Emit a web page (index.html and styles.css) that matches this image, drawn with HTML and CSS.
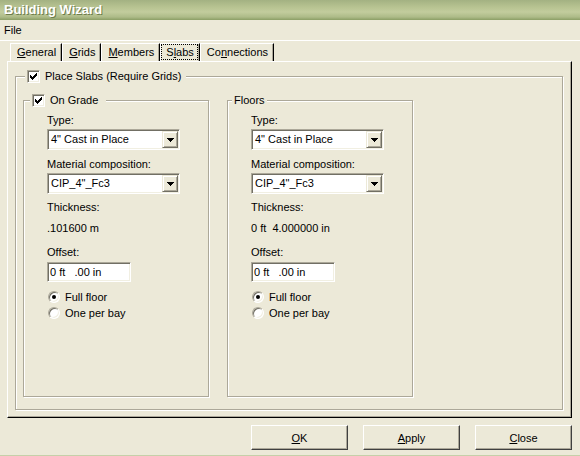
FILE: index.html
```html
<!DOCTYPE html>
<html>
<head>
<meta charset="utf-8">
<title>Building Wizard</title>
<link rel="stylesheet" href="styles.css">
</head>
<body>
<div class="window">
  <div class="titlebar">Building Wizard</div>
  <div class="menubar"><span class="menu-item">File</span></div>
  <div class="main">
    <div class="tabs">
      <div class="tab"><span class="tab-label"><u>G</u>eneral</span></div>
      <div class="tab"><span class="tab-label"><u>G</u>rids</span></div>
      <div class="tab"><span class="tab-label"><u>M</u>embers</span></div>
      <div class="tab tab-active"><span class="tab-label">S<u>l</u>abs</span></div>
      <div class="tab"><span class="tab-label">Co<u>n</u>nections</span></div>
    </div>
    <div class="panel">
      <fieldset class="group group-outer">
        <legend class="legend legend-outer">
          <span class="checkbox"><svg width="9" height="9" viewBox="0 0 9 9" shape-rendering="crispEdges"><path d="M1 3h1v3H1z M2 4h1v3H2z M3 5h1v3H3z M4 4h1v3H4z M5 3h1v3H5z M6 2h1v3H6z M7 1h1v3H7z" fill="#000"/></svg></span>
          <span>Place Slabs (Require Grids)</span>
        </legend>
        <div class="group-row">
          <fieldset class="group group-inner">
            <legend class="legend legend-grade">
              <span class="checkbox"><svg width="9" height="9" viewBox="0 0 9 9" shape-rendering="crispEdges"><path d="M1 3h1v3H1z M2 4h1v3H2z M3 5h1v3H3z M4 4h1v3H4z M5 3h1v3H5z M6 2h1v3H6z M7 1h1v3H7z" fill="#000"/></svg></span>
              <span>On Grade</span>
            </legend>
            <div class="group-body">
              <div class="label">Type:</div>
              <div class="combo">
                <span class="combo-text">4" Cast in Place</span>
                <span class="combo-btn"><svg width="7" height="4" viewBox="0 0 7 4" shape-rendering="crispEdges"><path d="M0 0h7v1H0z M1 1h5v1H1z M2 2h3v1H2z M3 3h1v1H3z" fill="#000"/></svg></span>
              </div>
              <div class="label label-after-combo">Material composition:</div>
              <div class="combo">
                <span class="combo-text">CIP_4"_Fc3</span>
                <span class="combo-btn"><svg width="7" height="4" viewBox="0 0 7 4" shape-rendering="crispEdges"><path d="M0 0h7v1H0z M1 1h5v1H1z M2 2h3v1H2z M3 3h1v1H3z" fill="#000"/></svg></span>
              </div>
              <div class="label label-thickness">Thickness:</div>
              <div class="label label-value">.101600 m</div>
              <div class="label label-offset">Offset:</div>
              <div class="textbox">0 ft   .00 in</div>
              <div class="radio-list">
                <div class="radio"><span class="radio-dot radio-checked"></span><span>Full floor</span></div>
                <div class="radio"><span class="radio-dot"></span><span>One per bay</span></div>
              </div>
            </div>
          </fieldset>
          <fieldset class="group group-inner">
            <legend class="legend legend-floors"><span>Floors</span></legend>
            <div class="group-body">
              <div class="label">Type:</div>
              <div class="combo">
                <span class="combo-text">4" Cast in Place</span>
                <span class="combo-btn"><svg width="7" height="4" viewBox="0 0 7 4" shape-rendering="crispEdges"><path d="M0 0h7v1H0z M1 1h5v1H1z M2 2h3v1H2z M3 3h1v1H3z" fill="#000"/></svg></span>
              </div>
              <div class="label label-after-combo">Material composition:</div>
              <div class="combo">
                <span class="combo-text">CIP_4"_Fc3</span>
                <span class="combo-btn"><svg width="7" height="4" viewBox="0 0 7 4" shape-rendering="crispEdges"><path d="M0 0h7v1H0z M1 1h5v1H1z M2 2h3v1H2z M3 3h1v1H3z" fill="#000"/></svg></span>
              </div>
              <div class="label label-thickness">Thickness:</div>
              <div class="label label-value">0 ft  4.000000 in</div>
              <div class="label label-offset">Offset:</div>
              <div class="textbox">0 ft   .00 in</div>
              <div class="radio-list">
                <div class="radio"><span class="radio-dot radio-checked"></span><span>Full floor</span></div>
                <div class="radio"><span class="radio-dot"></span><span>One per bay</span></div>
              </div>
            </div>
          </fieldset>
        </div>
      </fieldset>
    </div>
    <div class="buttons">
      <button class="btn"><u>O</u>K</button>
      <button class="btn"><u>A</u>pply</button>
      <button class="btn"><u>C</u>lose</button>
    </div>
  </div>
</div>
</body>
</html>
```

FILE: styles.css
```css
* { box-sizing: border-box; }
html, body { margin: 0; padding: 0; }
body {
  width: 580px;
  height: 456px;
  overflow: hidden;
  background: #ece9d8;
  color: #000;
  font: 11px "Liberation Sans", Arial, sans-serif;
}
u { text-underline-offset: 1px; }

.window {
  height: 456px;
  display: flex;
  flex-direction: column;
  border-bottom: 1px solid #c5d0a9;
}
.titlebar {
  flex: none;
  height: 20px;
  padding-left: 4px;
  font: bold 13px/19px "Liberation Sans", Arial, sans-serif;
  color: #fff;
  text-shadow: 1px 1px 0 #6e7d4c;
  background: linear-gradient(#a3b182 0, #b7c391 35%, #c2cc9d 60%, #adbb88 85%, #8b9e65 100%);
}
.menubar {
  flex: none;
  height: 21px;
  padding-left: 4px;
  line-height: 20px;
  border-bottom: 1px solid #fff;
}
.main {
  flex: 1;
  display: flex;
  flex-direction: column;
  padding: 2px 8px 0 7px;
}

/* tabs */
.tabs {
  display: flex;
  height: 18px;
  margin-left: 3px;
}
.tab {
  border-top: 1px solid #fff;
  border-left: 1px solid #fff;
  border-right: 1px solid #000;
  box-shadow: inset -1px 0 0 #aca899;
  padding: 0 5px 0 6px;
  line-height: 17px;
}
.tab-active {
  padding: 0 1px 0 0;
}
.tab-active .tab-label {
  display: block;
  height: 16px;
  line-height: 15px;
  padding: 0 3px 0 4px;
  border: 1px dotted #000;
}

/* panel */
.panel {
  height: 357px;
  display: flex;
  flex-direction: column;
  border-top: 1px solid #fff;
  border-left: 1px solid #fff;
  border-right: 1px solid #000;
  border-bottom: 1px solid #000;
  box-shadow: inset -1px -1px 0 #aca899;
  padding: 8px 8px 7px 7px;
}

.group {
  margin: 0;
  padding: 0;
  min-width: 0;
  border: 1px solid #aca899;
  box-shadow: inset 1px 1px 0 #fff, 1px 1px 0 #fff;
}
.group-outer {
  flex: 1;
}
.legend {
  height: 13px;
  line-height: 13px;
  display: flex;
  align-items: center;
  gap: 5px;
  background: #ece9d8;
}
.legend-outer { margin-left: 9px; padding: 0 5px 0 2px; }
.legend-grade { margin-left: 6px; padding: 0 8px 0 2px; }
.legend-floors { margin-left: 4px; padding: 0 2px; }

.checkbox {
  width: 13px;
  height: 13px;
  flex: none;
  background: #fff;
  border: 1px solid;
  border-color: #aca899 #fff #fff #aca899;
  box-shadow: inset 1px 1px 0 #716f64, inset -1px -1px 0 #f1efe2;
  padding: 1px;
  display: flex;
}

.group-row {
  display: flex;
  gap: 18px;
  padding: 11px 0 0 7px;
}
.group-inner {
  width: 186px;
  height: 303px;
}
.group-body {
  padding: 7px 0 0 23px;
}

.label {
  height: 13px;
  line-height: 13px;
  white-space: pre;
}
.label-after-combo { margin-top: 8px; }
.label-thickness { margin-top: 7px; }
.label-value { margin-top: 8px; }
.label-offset { margin-top: 11px; }

.combo {
  margin-top: 2px;
  width: 133px;
  height: 21px;
  display: flex;
  background: #fff;
  border: 1px solid;
  border-color: #aca899 #fff #fff #aca899;
  box-shadow: inset 1px 1px 0 #716f64, inset -1px -1px 0 #f1efe2;
  padding: 1px;
}
.combo-text {
  flex: 1;
  padding-left: 2px;
  line-height: 17px;
  white-space: pre;
}
.combo-btn {
  width: 16px;
  height: 17px;
  flex: none;
  display: flex;
  align-items: center;
  justify-content: center;
  background: #ece9d8;
  border: 1px solid;
  border-color: #ece9d8 #716f64 #716f64 #ece9d8;
  box-shadow: inset 1px 1px 0 #fff, inset -1px -1px 0 #aca899;
}

.textbox {
  margin-top: 3px;
  width: 84px;
  height: 20px;
  background: #fff;
  border: 1px solid;
  border-color: #aca899 #fff #fff #aca899;
  box-shadow: inset 1px 1px 0 #716f64, inset -1px -1px 0 #f1efe2;
  padding: 1px 1px 1px 2px;
  line-height: 16px;
  white-space: pre;
}

.radio-list { margin-top: 7px; }
.radio {
  height: 16px;
  display: flex;
  align-items: center;
  gap: 5px;
  padding-left: 1px;
}
.radio-dot {
  width: 12px;
  height: 12px;
  flex: none;
  border-radius: 50%;
  background: #fff;
  border: 1px solid;
  border-color: #aca899 #fff #fff #aca899;
  box-shadow: inset 1px 1px 0 #716f64, inset -1px -1px 0 #f1efe2;
  display: flex;
  align-items: center;
  justify-content: center;
}
.radio-checked::after {
  content: "";
  width: 4px;
  height: 4px;
  border-radius: 50%;
  background: #000;
}

/* buttons */
.buttons {
  display: flex;
  justify-content: flex-end;
  gap: 15px;
  margin-top: 7px;
}
.btn {
  width: 97px;
  height: 25px;
  padding: 0;
  font: 11px "Liberation Sans", Arial, sans-serif;
  color: #000;
  background: #ece9d8;
  border: 1px solid;
  border-color: #fff #404040 #404040 #fff;
  box-shadow: inset -1px -1px 0 #aca899;
}
```
